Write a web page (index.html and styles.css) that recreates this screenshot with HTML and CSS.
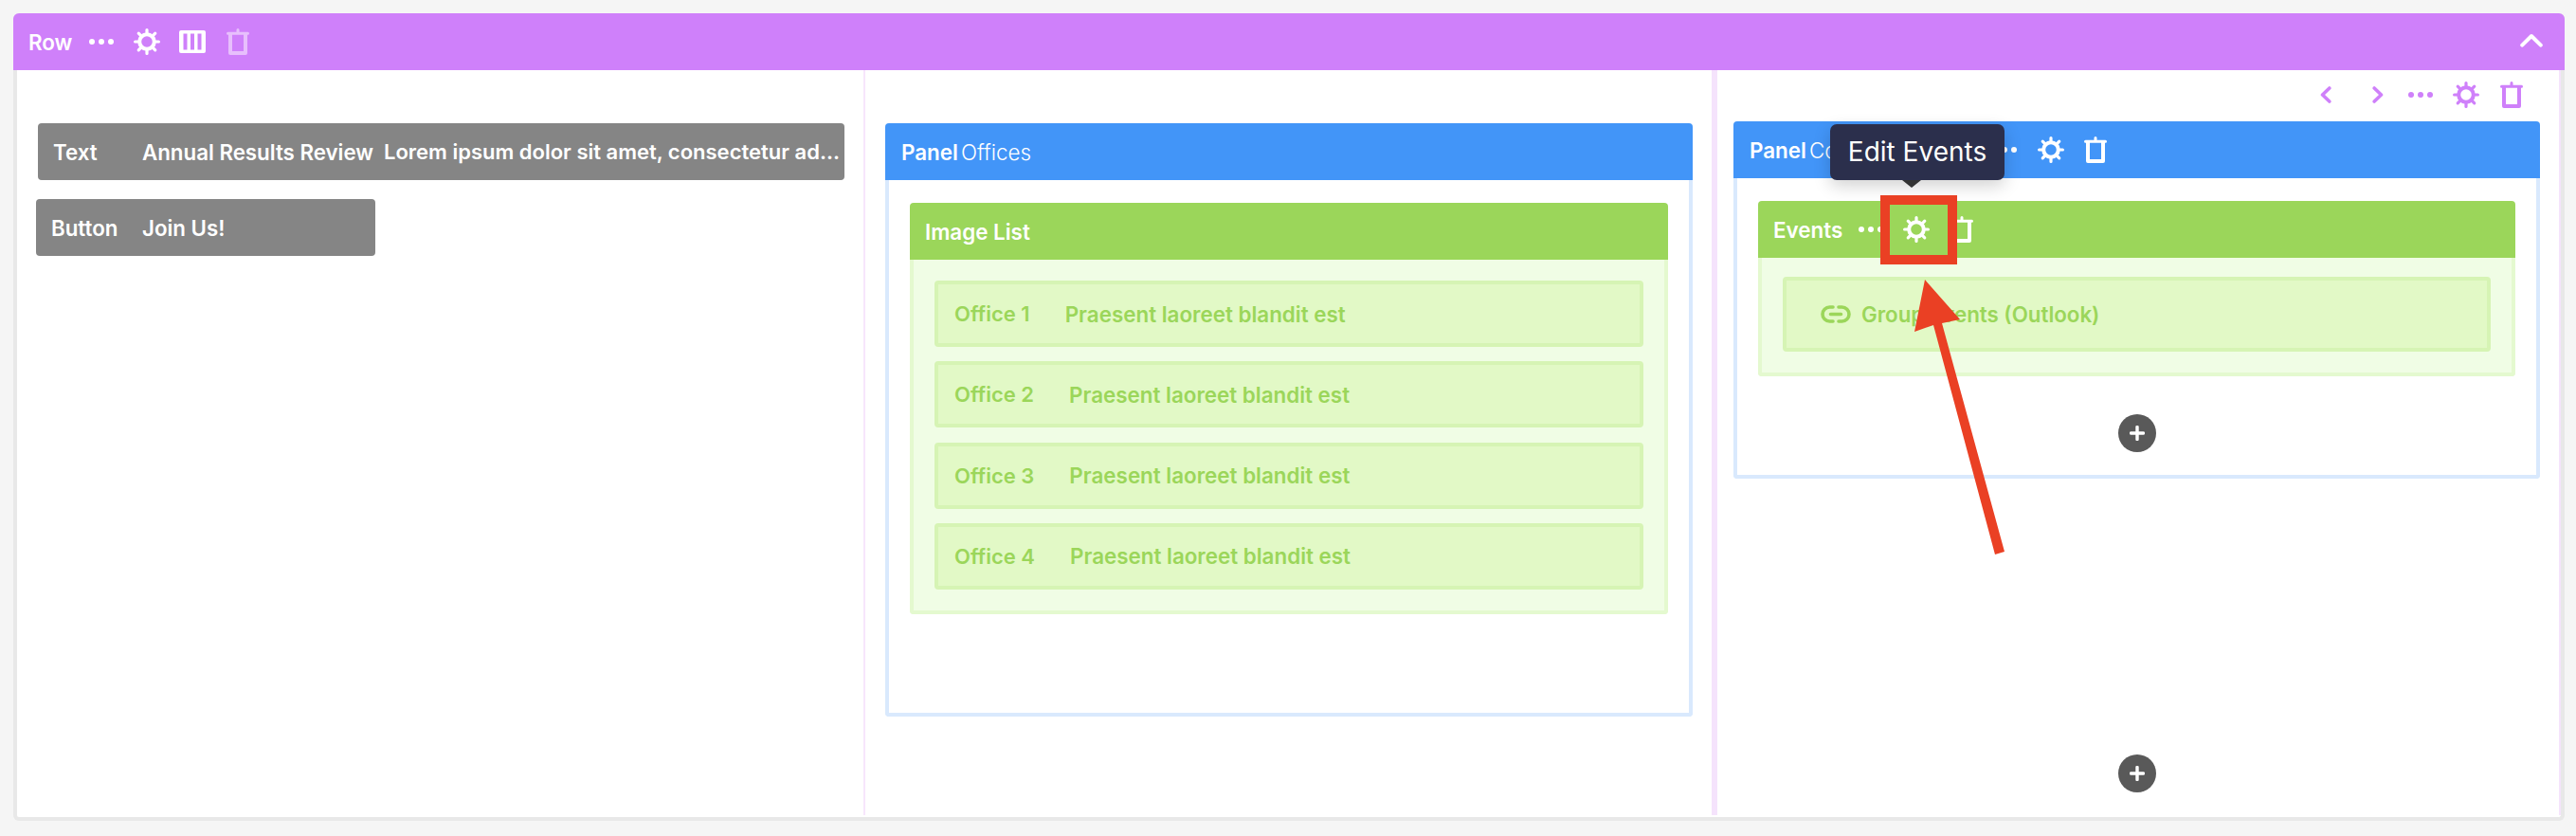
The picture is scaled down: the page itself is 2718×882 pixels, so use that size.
FILE: index.html
```html
<!DOCTYPE html>
<html lang="en">
<head>
  <meta charset="UTF-8">
  <meta name="viewport" content="width=device-width, initial-scale=1.0">
  <title>Page Builder</title>
  <link rel="stylesheet" href="styles.css">
</head>
<body>

  <svg class="defs" width="0" height="0">
    <symbol id="gear" viewBox="0 0 28 28">
      <g fill="none" stroke="currentColor">
        <circle cx="14" cy="14" r="7.8" stroke-width="4"/>
        <g stroke-width="3.2" stroke-linecap="round">
          <path d="M14 1.6V6M14 22V26.4"/>
          <path d="M14 1.6V6M14 22V26.4" transform="rotate(45 14 14)"/>
          <path d="M14 1.6V6M14 22V26.4" transform="rotate(90 14 14)"/>
          <path d="M14 1.6V6M14 22V26.4" transform="rotate(135 14 14)"/>
        </g>
      </g>
    </symbol>
    <symbol id="trash" viewBox="0 0 24 28">
      <g fill="none" stroke="currentColor">
        <path d="M4 5V26H20V5" stroke-width="4" stroke-linejoin="round"/>
        <path d="M1.5 5.2H22.5M12 1.5V5" stroke-width="3" stroke-linecap="round"/>
      </g>
    </symbol>
    <symbol id="dots" viewBox="0 0 26 6">
      <circle cx="3" cy="3" r="3" fill="currentColor"/>
      <circle cx="13" cy="3" r="3" fill="currentColor"/>
      <circle cx="23" cy="3" r="3" fill="currentColor"/>
    </symbol>
    <symbol id="columns" viewBox="0 0 28 24">
      <path fill="currentColor" fill-rule="evenodd" d="M2 0H26A2 2 0 0 1 28 2V22A2 2 0 0 1 26 24H2A2 2 0 0 1 0 22V2A2 2 0 0 1 2 0ZM4.5 3.5V20.5H8.5V3.5ZM12 3.5V20.5H16V3.5ZM19.5 3.5V20.5H23.5V3.5Z"/>
    </symbol>
  </svg>

  <div class="row">
    <div class="row-header">
      <span class="bar-name">Row</span>
      <svg class="icon-dots"><use href="#dots"/></svg>
      <svg class="icon-gear"><use href="#gear"/></svg>
      <svg class="icon-columns"><use href="#columns"/></svg>
      <svg class="icon-trash faded"><use href="#trash"/></svg>
      <svg class="collapse" viewBox="0 0 24 15">
        <path d="M2.2 12.6L12 3L21.8 12.6" fill="none" stroke="currentColor" stroke-width="4" stroke-linecap="round" stroke-linejoin="round"/>
      </svg>
    </div>

    <div class="columns">
      <div class="col col-left">
        <div class="block block-text">
          <span class="block-type">Text</span>
          <span class="block-title">Annual Results Review</span>
          <span class="block-desc">Lorem ipsum dolor sit amet, consectetur adipiscing elit</span>
        </div>
        <div class="block block-button">
          <span class="block-type">Button</span>
          <span class="block-title">Join Us!</span>
        </div>
      </div>

      <div class="col col-mid">
        <div class="panel">
          <div class="panel-header">
            <span class="bar-name">Panel</span>
            <span class="panel-title">Offices</span>
          </div>
          <div class="panel-body panel-body-tall">
            <div class="list">
              <div class="list-header">
                <span class="bar-name">Image List</span>
              </div>
              <div class="list-body">
                <div class="list-item"><span>Office 1</span><span class="item-desc">Praesent laoreet blandit est</span></div>
                <div class="list-item"><span>Office 2</span><span class="item-desc">Praesent laoreet blandit est</span></div>
                <div class="list-item"><span>Office 3</span><span class="item-desc">Praesent laoreet blandit est</span></div>
                <div class="list-item"><span>Office 4</span><span class="item-desc">Praesent laoreet blandit est</span></div>
              </div>
            </div>
          </div>
        </div>
      </div>

      <div class="col col-right">
        <div class="col-tools">
          <svg class="chevron" viewBox="0 0 12 18"><path d="M9.8 2L2.5 9L9.8 16" fill="none" stroke="currentColor" stroke-width="3.6" stroke-linecap="round" stroke-linejoin="round"/></svg>
          <svg class="chevron chevron-next" viewBox="0 0 12 18"><path d="M2.2 2L9.5 9L2.2 16" fill="none" stroke="currentColor" stroke-width="3.6" stroke-linecap="round" stroke-linejoin="round"/></svg>
          <svg class="icon-dots"><use href="#dots"/></svg>
          <svg class="icon-gear"><use href="#gear"/></svg>
          <svg class="icon-trash"><use href="#trash"/></svg>
        </div>
        <div class="panel">
          <div class="panel-header">
            <span class="bar-name">Panel</span>
            <span class="panel-title">Contacts</span>
            <svg class="icon-dots panel-dots"><use href="#dots"/></svg>
            <svg class="icon-gear"><use href="#gear"/></svg>
            <svg class="icon-trash"><use href="#trash"/></svg>
          </div>
          <div class="panel-body">
            <div class="list">
              <div class="list-header">
                <span class="bar-name">Events</span>
                <svg class="icon-dots"><use href="#dots"/></svg>
                <svg class="icon-gear"><use href="#gear"/></svg>
                <svg class="icon-trash"><use href="#trash"/></svg>
              </div>
              <div class="list-body list-body-events">
                <div class="list-item list-item-link">
                  <svg class="icon-link" viewBox="0 0 32 19">
                    <path d="M13 2H9.5A7.5 7.5 0 0 0 9.5 17H13M19 2H22.5A7.5 7.5 0 0 1 22.5 17H19M10.5 9.5H21.5" fill="none" stroke="currentColor" stroke-width="3.6" stroke-linecap="round"/>
                  </svg>
                  <span class="link-name">Group Events (Outlook)</span>
                </div>
              </div>
            </div>
            <div class="add add-in-panel"><svg viewBox="0 0 16 16"><path d="M8 1.5V14.5M1.5 8H14.5" stroke="currentColor" stroke-width="3.4" stroke-linecap="round"/></svg></div>
          </div>
        </div>
        <div class="add add-in-col"><svg viewBox="0 0 16 16"><path d="M8 1.5V14.5M1.5 8H14.5" stroke="currentColor" stroke-width="3.4" stroke-linecap="round"/></svg></div>
      </div>
    </div>
  </div>

  <!-- annotation layer on top of the screenshot -->
  <div class="tooltip">Edit Events</div>
  <div class="callout-box"></div>
  <svg class="callout-arrow" viewBox="2010 290 115 300">
    <polygon points="2031,295 2068,337 2049,341 2115,582 2105,585 2040,343 2020,350"/>
  </svg>

</body>
</html>
```

FILE: styles.css
```css
* {
  margin: 0;
  padding: 0;
  box-sizing: border-box;
  font-family: Inter, "Liberation Sans", sans-serif;
}

body {
  position: relative;
  height: 882px;
  background-color: #f5f5f5;
  overflow: hidden;
}

svg {
  display: block;
  flex-shrink: 0;
}

.defs {
  position: absolute;
}

.bar-name {
  font-size: 22.4px;
  font-weight: 600;
}

.icon-dots {
  width: 26px;
  height: 6px;
}

.icon-gear {
  width: 28px;
  height: 28px;
}

.icon-trash {
  width: 24px;
  height: 28px;
}

.icon-columns {
  width: 28px;
  height: 24px;
}

.faded {
  opacity: 0.5;
}

/* row */
.row {
  display: flex;
  flex-direction: column;
  height: 852px;
  margin: 14px 12px 0 14px;
  background-color: white;
  border: 4px solid #e8e8e8;
  border-top: none;
  border-radius: 6px;
}

.row-header {
  display: flex;
  align-items: center;
  height: 60px;
  margin: 0 -4px;
  padding: 0 23px 0 16px;
  background-color: #cf80fa;
  color: white;
  border-radius: 6px 6px 0 0;
}

.row-header .icon-dots {
  margin-left: 18px;
}

.row-header .icon-gear {
  margin-left: 21px;
}

.row-header .icon-columns {
  margin-left: 20px;
}

.row-header .icon-trash {
  margin-left: 22px;
}

.collapse {
  width: 24px;
  height: 15px;
  margin-left: auto;
  margin-top: -3px;
}

.columns {
  display: flex;
  flex-grow: 1;
  padding-bottom: 2px;
}

.col {
  height: 100%;
}

.col-left {
  width: 895px;
  padding: 56px 20px 0 20px;
  border-right: 2px solid #f7e6fc;
}

.col-mid {
  width: 896px;
  padding: 56px 20px 0 21px;
  border-right: 3px solid #f5e3fc;
}

.col-right {
  display: flex;
  flex-direction: column;
  width: 893px;
  padding: 12px 20px 24px 17px;
  border-left: 3px solid #f5e3fc;
  border-right: 2px solid #f5e3fc;
}

/* grey content blocks */
.block {
  display: flex;
  align-items: center;
  height: 60px;
  background-color: #858585;
  color: white;
  font-size: 22.3px;
  font-weight: 600;
  border-radius: 4px;
  white-space: nowrap;
}

.block-text {
  margin-left: 2px;
  padding: 0 3px 0 16px;
}

.block-text .block-type {
  width: 94px;
}

.block-button {
  width: 358px;
  margin-top: 20px;
  padding-left: 16px;
}

.block-button .block-type {
  width: 96px;
}

.block-type {
  flex-shrink: 0;
}

.block-title {
  flex-shrink: 0;
}

.block-desc {
  min-width: 0;
  margin-left: 11px;
  font-size: 22px;
  overflow: hidden;
  text-overflow: ellipsis;
}

/* panels */
.panel-header {
  display: flex;
  align-items: center;
  height: 60px;
  padding: 0 17px;
  background-color: #4295f8;
  color: white;
  border-radius: 4px 4px 0 0;
}

.panel-title {
  margin-left: 3px;
  font-size: 22.4px;
  font-weight: 300;
}

.panel-dots {
  margin-left: 101px;
}

.panel-header .icon-gear {
  margin-left: 22px;
}

.panel-header .icon-trash {
  margin-left: 21px;
}

.panel-body {
  padding: 24px 22px 24px;
  border: 4px solid #d9e9fd;
  border-top: none;
  border-radius: 0 0 4px 4px;
}

.panel-body-tall {
  padding-bottom: 104px;
}

.col-tools {
  display: flex;
  align-items: center;
  height: 28px;
  margin-bottom: 14px;
  padding-right: 18px;
  justify-content: flex-end;
  color: #cf80fa;
}

.chevron {
  width: 12px;
  height: 18px;
}

.chevron-next {
  margin-left: 43px;
}

.col-tools .icon-dots {
  margin-left: 26px;
}

.col-tools .icon-gear {
  margin-left: 21px;
}

.col-tools .icon-trash {
  margin-left: 22px;
}

/* green list */
.list-header {
  display: flex;
  align-items: center;
  height: 60px;
  padding: 0 16px;
  background-color: #9bd65a;
  color: white;
  border-radius: 4px 4px 0 0;
}

.list-header .icon-dots {
  margin-left: 17px;
}

.list-header .icon-gear {
  margin-left: 21px;
}

.list-header .icon-trash {
  margin-left: 22px;
}

.list-body {
  display: flex;
  flex-direction: column;
  gap: 15.33px;
  padding: 22px;
  background-color: #f0fde5;
  border: 4px solid #e4f9cf;
  border-top: none;
  border-radius: 0 0 4px 4px;
}

.list-body-events {
  padding-top: 20px;
}

.list-item {
  display: flex;
  align-items: center;
  gap: 37px;
  height: 70px;
  padding: 0 17px;
  background-color: #e2f9c6;
  border: 4px solid #d6f4b4;
  border-radius: 4px;
  color: #9bd65a;
  font-size: 22px;
  font-weight: 600;
}

.item-desc {
  font-size: 22.4px;
}

.list-item-link {
  gap: 11px;
  height: 79px;
  padding-left: 36px;
}

.link-name {
  font-size: 22.3px;
}

.icon-link {
  width: 32px;
  height: 19px;
}

/* add buttons */
.add {
  display: flex;
  align-items: center;
  justify-content: center;
  width: 40px;
  height: 40px;
  background-color: #595959;
  color: white;
  border-radius: 50%;
  align-self: center;
}

.add svg {
  width: 16px;
  height: 16px;
}

.add-in-panel {
  margin: 40px auto 0;
}

.add-in-col {
  margin-top: auto;
}

/* annotation layer */
.tooltip {
  position: absolute;
  left: 1931px;
  top: 131px;
  width: 184px;
  height: 59px;
  line-height: 59px;
  text-align: center;
  background-color: #2b2f4c;
  color: white;
  font-size: 28px;
  border-radius: 7px;
  box-shadow: 0 6px 18px rgba(0, 0, 0, 0.18);
}

.tooltip::after {
  content: "";
  position: absolute;
  left: 76px;
  top: 59px;
  border-left: 10px solid transparent;
  border-right: 10px solid transparent;
  border-top: 8px solid #333333;
}

.callout-box {
  position: absolute;
  left: 1984px;
  top: 206px;
  width: 81px;
  height: 73px;
  border: 10px solid #ea4024;
}

.callout-arrow {
  position: absolute;
  left: 2010px;
  top: 290px;
  width: 115px;
  height: 300px;
  fill: #ea4024;
}
```
